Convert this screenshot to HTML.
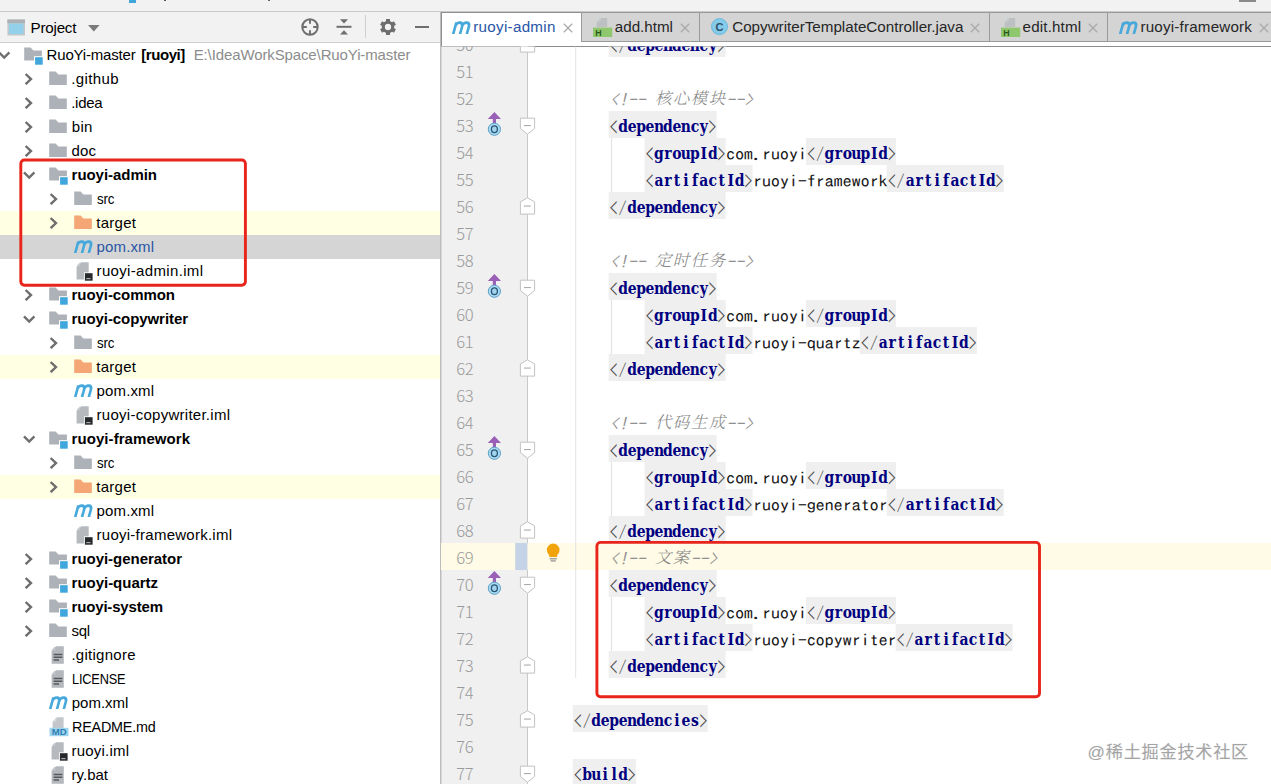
<!DOCTYPE html><html lang="zh"><head><meta charset="utf-8"><title>RuoYi-master - pom.xml (ruoyi-admin)</title><style>
html,body{margin:0;padding:0}
body{width:1271px;height:784px;overflow:hidden;position:relative;background:#fff;font-family:'Liberation Sans', 'Noto Sans CJK SC', sans-serif;color:#000}
.ab{position:absolute}
.row{position:absolute;left:0;width:440px;height:24px}
.t{white-space:pre;line-height:24px;height:24px;color:#000}
.t.b{font-weight:bold}
.t.g{color:#8c8c8c}
.t.tb{color:#262626}
.t.sel{color:#2a55a5}
svg text{white-space:pre}
.p{font-family:'IPAGothic', 'Liberation Mono', monospace;font-size:16.4px;fill:#4a4a4a;text-anchor:middle}
.cp{font-family:'IPAGothic', 'Liberation Mono', monospace;font-size:15.2px;font-style:italic;fill:#909090;text-anchor:middle}
.cd{font-family:'IPAGothic', 'Liberation Mono', monospace;font-size:17.6px;font-style:italic;fill:#909090;text-anchor:middle}
.tx{font-family:'IPAGothic', 'Liberation Mono', monospace;font-size:16.4px;fill:#161616;text-anchor:middle}
.ln{font-family:'Noto Sans CJK SC','Liberation Sans',sans-serif;font-weight:300;font-size:16.6px;fill:#9a9a9a;text-anchor:middle}
.zh{font-family:'Liberation Serif', 'Noto Serif CJK SC', serif;font-size:16.4px;font-style:italic;font-weight:300;fill:#868686;text-anchor:middle}
.bt{font-family:'DejaVu Serif','Liberation Serif', 'Noto Serif CJK SC', serif;font-size:16.8px;font-weight:bold;fill:#000080;text-anchor:middle}
</style></head><body>
<div class="ab" style="left:0;top:0;width:1271px;height:11.5px;background:#f2f2f2"></div>
<div class="ab" style="left:0;top:11px;width:1271px;height:1px;background:#c9c9c9"></div>
<div class="ab" style="left:0;top:12px;width:440px;height:30px;background:#f2f2f2"></div>
<div class="ab" style="left:0;top:41.6px;width:440px;height:1px;background:#cfcfcf"></div>
<div class="ab" style="left:440px;top:12px;width:1px;height:772px;background:#bdbdbd"></div>
<div class="ab" style="left:441px;top:12px;width:830px;height:34px;background:#fff"></div>
<svg class="ab" style="left:6.6px;top:19px" width="19" height="18" viewBox="0 0 19 18"><rect x="0.4" y="0.5" width="17.6" height="16" fill="#c3c7cb"/><rect x="2" y="4.4" width="14.4" height="10.6" fill="#93d1ea"/><rect x="0.4" y="0.5" width="17.6" height="3.6" fill="#adb1b6"/></svg>
<span class="ab t " style="left:30.6px;top:15.6px;font-size:15.2px;letter-spacing:-0.235px;">Project</span>
<svg class="ab" style="left:88px;top:24.6px" width="12" height="7" viewBox="0 0 12 7"><path d="M0 0 H11.6 L5.8 6.4 Z" fill="#7a7a7a"/></svg>
<svg class="ab" style="left:300px;top:17px" width="20" height="20" viewBox="0 0 20 20"><circle cx="10" cy="10" r="7.7" fill="none" stroke="#6e6e6e" stroke-width="2"/><path d="M10 2 V6.8 M10 13.2 V18 M2 10 H6.8 M13.2 10 H18" stroke="#6e6e6e" stroke-width="1.9"/></svg>
<svg class="ab" style="left:336px;top:18px" width="16" height="18" viewBox="0 0 16 18"><path d="M0.5 8.8 H15.5" stroke="#6e6e6e" stroke-width="2"/><path d="M4 1.2 H12 L8 5.6 Z M4 16.6 H12 L8 12.2 Z" fill="#6e6e6e"/></svg>
<div class="ab" style="left:365px;top:15px;width:1px;height:23px;background:#d0d0d0"></div>
<svg class="ab" style="left:379px;top:18px" width="18" height="18" viewBox="-9 -9 18 18"><rect x="-2" y="-8" width="4" height="4.4" transform="rotate(0)" fill="#6e6e6e"/><rect x="-2" y="-8" width="4" height="4.4" transform="rotate(60)" fill="#6e6e6e"/><rect x="-2" y="-8" width="4" height="4.4" transform="rotate(120)" fill="#6e6e6e"/><rect x="-2" y="-8" width="4" height="4.4" transform="rotate(180)" fill="#6e6e6e"/><rect x="-2" y="-8" width="4" height="4.4" transform="rotate(240)" fill="#6e6e6e"/><rect x="-2" y="-8" width="4" height="4.4" transform="rotate(300)" fill="#6e6e6e"/><circle cx="0" cy="0" r="4.7" fill="none" stroke="#6e6e6e" stroke-width="3.1"/></svg>
<div class="ab" style="left:414.6px;top:25.8px;width:14.8px;height:2.4px;background:#6e6e6e"></div>
<div class="ab" style="left:1238.6px;top:0;width:17.4px;height:1.6px;background:#8a8a8a"></div>
<div class="ab" style="left:128.6px;top:0;width:7.4px;height:2.6px;background:#3fa7dc"></div>
<div class="ab" style="left:163.6px;top:0;width:2.2px;height:1.4px;background:#555"></div>
<div class="ab" style="left:268px;top:0;width:1.6px;height:1px;background:#666"></div>
<div id="side">
<div class="row" style="top:43px;"></div>
<svg class="ab" style="left:-1.9px;top:51.4px" width="13" height="9" viewBox="0 0 13 9"><path d="M1 1.4 L6.2 6.6 L11.4 1.4" fill="none" stroke="#6e6e6e" stroke-width="2.4"/></svg>
<svg class="ab" style="left:24.0px;top:47px" width="20" height="19" viewBox="0 0 20 19"><path d="M0.2 0.6 H6.6 L9.4 3.4 H17.9 V13.6 H0.2 Z" fill="#adb1b8"/><rect x="10" y="9.2" width="9.6" height="9.2" fill="#fff"/><rect x="11.1" y="10.2" width="7.6" height="7.5" fill="#3fa7dc"/></svg>
<span class="ab t " style="left:46.6px;top:43px;font-size:15.0px;letter-spacing:-0.185px;">RuoYi-master</span>
<span class="ab t b" style="left:141.2px;top:43px;font-size:15.0px;letter-spacing:-0.427px;">[ruoyi]</span>
<span class="ab t g" style="left:193.7px;top:43px;font-size:15.0px;letter-spacing:-0.118px;">E:\IdeaWorkSpace\RuoYi-master</span>
<div class="row" style="top:67px;"></div>
<svg class="ab" style="left:23.8px;top:72.7px" width="9" height="12" viewBox="0 0 9 12"><path d="M1.6 1 L7 6.1 L1.6 11.2" fill="none" stroke="#6e6e6e" stroke-width="2.4"/></svg>
<svg class="ab" style="left:49.2px;top:71px" width="19" height="15" viewBox="0 0 19 15"><path d="M0.2 0.6 H6.6 L9.4 3.4 H17.8 V13.9 H0.2 Z" fill="#adb1b8"/></svg>
<span class="ab t " style="left:71.2px;top:67px;font-size:15.0px;letter-spacing:0.394px;">.github</span>
<div class="row" style="top:91px;"></div>
<svg class="ab" style="left:23.8px;top:96.7px" width="9" height="12" viewBox="0 0 9 12"><path d="M1.6 1 L7 6.1 L1.6 11.2" fill="none" stroke="#6e6e6e" stroke-width="2.4"/></svg>
<svg class="ab" style="left:49.2px;top:95px" width="19" height="15" viewBox="0 0 19 15"><path d="M0.2 0.6 H6.6 L9.4 3.4 H17.8 V13.9 H0.2 Z" fill="#adb1b8"/></svg>
<span class="ab t " style="left:71.2px;top:91px;font-size:15.0px;letter-spacing:-0.257px;">.idea</span>
<div class="row" style="top:115px;"></div>
<svg class="ab" style="left:23.8px;top:120.7px" width="9" height="12" viewBox="0 0 9 12"><path d="M1.6 1 L7 6.1 L1.6 11.2" fill="none" stroke="#6e6e6e" stroke-width="2.4"/></svg>
<svg class="ab" style="left:49.2px;top:119px" width="19" height="15" viewBox="0 0 19 15"><path d="M0.2 0.6 H6.6 L9.4 3.4 H17.8 V13.9 H0.2 Z" fill="#adb1b8"/></svg>
<span class="ab t " style="left:71.8px;top:115px;font-size:15.0px;letter-spacing:0.291px;">bin</span>
<div class="row" style="top:139px;"></div>
<svg class="ab" style="left:23.8px;top:144.7px" width="9" height="12" viewBox="0 0 9 12"><path d="M1.6 1 L7 6.1 L1.6 11.2" fill="none" stroke="#6e6e6e" stroke-width="2.4"/></svg>
<svg class="ab" style="left:49.2px;top:143px" width="19" height="15" viewBox="0 0 19 15"><path d="M0.2 0.6 H6.6 L9.4 3.4 H17.8 V13.9 H0.2 Z" fill="#adb1b8"/></svg>
<span class="ab t " style="left:71.6px;top:139px;font-size:15.0px;letter-spacing:0.107px;">doc</span>
<div class="row" style="top:163px;"></div>
<svg class="ab" style="left:23.099999999999998px;top:171.4px" width="13" height="9" viewBox="0 0 13 9"><path d="M1 1.4 L6.2 6.6 L11.4 1.4" fill="none" stroke="#6e6e6e" stroke-width="2.4"/></svg>
<svg class="ab" style="left:49.2px;top:167px" width="20" height="19" viewBox="0 0 20 19"><path d="M0.2 0.6 H6.6 L9.4 3.4 H17.9 V13.6 H0.2 Z" fill="#adb1b8"/><rect x="10" y="9.2" width="9.6" height="9.2" fill="#fff"/><rect x="11.1" y="10.2" width="7.6" height="7.5" fill="#3fa7dc"/></svg>
<span class="ab t b" style="left:71.6px;top:163px;font-size:15.0px;letter-spacing:-0.044px;">ruoyi-admin</span>
<div class="row" style="top:187px;"></div>
<svg class="ab" style="left:49.0px;top:192.7px" width="9" height="12" viewBox="0 0 9 12"><path d="M1.6 1 L7 6.1 L1.6 11.2" fill="none" stroke="#6e6e6e" stroke-width="2.4"/></svg>
<svg class="ab" style="left:74.1px;top:191px" width="19" height="15" viewBox="0 0 19 15"><path d="M0.2 0.6 H6.6 L9.4 3.4 H17.8 V13.9 H0.2 Z" fill="#adb1b8"/></svg>
<span class="ab t " style="left:96.6px;top:187px;font-size:15.0px;letter-spacing:-0.200px;display:inline-block;transform:scaleX(0.8879);transform-origin:0 50%;">src</span>
<div class="row" style="top:211px;background:#ffffe4;"></div>
<svg class="ab" style="left:49.0px;top:216.7px" width="9" height="12" viewBox="0 0 9 12"><path d="M1.6 1 L7 6.1 L1.6 11.2" fill="none" stroke="#6e6e6e" stroke-width="2.4"/></svg>
<svg class="ab" style="left:74.1px;top:215px" width="19" height="15" viewBox="0 0 19 15"><path d="M0.2 0.6 H6.6 L9.4 3.4 H17.8 V13.9 H0.2 Z" fill="#f4a674"/></svg>
<span class="ab t " style="left:96.3px;top:211px;font-size:15.0px;letter-spacing:0.268px;">target</span>
<div class="row" style="top:235px;background:#d5d5d5;"></div>
<svg class="ab" style="left:73.6px;top:239.4px" width="21" height="15" viewBox="0 0 21 15"><g transform="translate(3.4 0) skewX(-15)" fill="none" stroke="#47a9db" stroke-width="2.7" stroke-linejoin="round"><path d="M1.6 14 V2.2 M1.6 6.6 C1.6 1.4 8.4 1.4 8.4 6.4 V14 M8.4 6.6 C8.4 1.4 15.2 1.4 15.2 6.4 V14"/></g></svg>
<span class="ab t sel" style="left:96.6px;top:235px;font-size:15.0px;letter-spacing:0.121px;">pom.xml</span>
<div class="row" style="top:259px;"></div>
<svg class="ab" style="left:76.1px;top:262.1px" width="17" height="19" viewBox="0 0 17 19"><path d="M5.2 0.3 H12.7 V17.4 H0.6 V4.9 Z" fill="#b6babf"/><path d="M4.1 0.3 V3.9 H0.6 Z" fill="#c6c9cd"/><rect x="8" y="10.4" width="8.8" height="8.6" fill="#fff"/><rect x="8.9" y="11.2" width="7.7" height="7.5" fill="#26282b"/><rect x="10.3" y="16" width="4.2" height="1.2" fill="#a9acb0"/></svg>
<span class="ab t " style="left:96.6px;top:259px;font-size:15.0px;letter-spacing:0.336px;">ruoyi-admin.iml</span>
<div class="row" style="top:283px;"></div>
<svg class="ab" style="left:23.8px;top:288.7px" width="9" height="12" viewBox="0 0 9 12"><path d="M1.6 1 L7 6.1 L1.6 11.2" fill="none" stroke="#6e6e6e" stroke-width="2.4"/></svg>
<svg class="ab" style="left:49.2px;top:287px" width="20" height="19" viewBox="0 0 20 19"><path d="M0.2 0.6 H6.6 L9.4 3.4 H17.9 V13.6 H0.2 Z" fill="#adb1b8"/><rect x="10" y="9.2" width="9.6" height="9.2" fill="#fff"/><rect x="11.1" y="10.2" width="7.6" height="7.5" fill="#3fa7dc"/></svg>
<span class="ab t b" style="left:71.6px;top:283px;font-size:15.0px;letter-spacing:-0.070px;">ruoyi-common</span>
<div class="row" style="top:307px;"></div>
<svg class="ab" style="left:23.099999999999998px;top:315.4px" width="13" height="9" viewBox="0 0 13 9"><path d="M1 1.4 L6.2 6.6 L11.4 1.4" fill="none" stroke="#6e6e6e" stroke-width="2.4"/></svg>
<svg class="ab" style="left:49.2px;top:311px" width="20" height="19" viewBox="0 0 20 19"><path d="M0.2 0.6 H6.6 L9.4 3.4 H17.9 V13.6 H0.2 Z" fill="#adb1b8"/><rect x="10" y="9.2" width="9.6" height="9.2" fill="#fff"/><rect x="11.1" y="10.2" width="7.6" height="7.5" fill="#3fa7dc"/></svg>
<span class="ab t b" style="left:71.6px;top:307px;font-size:15.0px;letter-spacing:-0.075px;">ruoyi-copywriter</span>
<div class="row" style="top:331px;"></div>
<svg class="ab" style="left:49.0px;top:336.7px" width="9" height="12" viewBox="0 0 9 12"><path d="M1.6 1 L7 6.1 L1.6 11.2" fill="none" stroke="#6e6e6e" stroke-width="2.4"/></svg>
<svg class="ab" style="left:74.1px;top:335px" width="19" height="15" viewBox="0 0 19 15"><path d="M0.2 0.6 H6.6 L9.4 3.4 H17.8 V13.9 H0.2 Z" fill="#adb1b8"/></svg>
<span class="ab t " style="left:96.6px;top:331px;font-size:15.0px;letter-spacing:-0.200px;display:inline-block;transform:scaleX(0.8879);transform-origin:0 50%;">src</span>
<div class="row" style="top:355px;background:#ffffe4;"></div>
<svg class="ab" style="left:49.0px;top:360.7px" width="9" height="12" viewBox="0 0 9 12"><path d="M1.6 1 L7 6.1 L1.6 11.2" fill="none" stroke="#6e6e6e" stroke-width="2.4"/></svg>
<svg class="ab" style="left:74.1px;top:359px" width="19" height="15" viewBox="0 0 19 15"><path d="M0.2 0.6 H6.6 L9.4 3.4 H17.8 V13.9 H0.2 Z" fill="#f4a674"/></svg>
<span class="ab t " style="left:96.3px;top:355px;font-size:15.0px;letter-spacing:0.268px;">target</span>
<div class="row" style="top:379px;"></div>
<svg class="ab" style="left:73.6px;top:383.4px" width="21" height="15" viewBox="0 0 21 15"><g transform="translate(3.4 0) skewX(-15)" fill="none" stroke="#47a9db" stroke-width="2.7" stroke-linejoin="round"><path d="M1.6 14 V2.2 M1.6 6.6 C1.6 1.4 8.4 1.4 8.4 6.4 V14 M8.4 6.6 C8.4 1.4 15.2 1.4 15.2 6.4 V14"/></g></svg>
<span class="ab t " style="left:96.6px;top:379px;font-size:15.0px;letter-spacing:0.121px;">pom.xml</span>
<div class="row" style="top:403px;"></div>
<svg class="ab" style="left:76.1px;top:406.1px" width="17" height="19" viewBox="0 0 17 19"><path d="M5.2 0.3 H12.7 V17.4 H0.6 V4.9 Z" fill="#b6babf"/><path d="M4.1 0.3 V3.9 H0.6 Z" fill="#c6c9cd"/><rect x="8" y="10.4" width="8.8" height="8.6" fill="#fff"/><rect x="8.9" y="11.2" width="7.7" height="7.5" fill="#26282b"/><rect x="10.3" y="16" width="4.2" height="1.2" fill="#a9acb0"/></svg>
<span class="ab t " style="left:96.6px;top:403px;font-size:15.0px;letter-spacing:0.265px;">ruoyi-copywriter.iml</span>
<div class="row" style="top:427px;"></div>
<svg class="ab" style="left:23.099999999999998px;top:435.4px" width="13" height="9" viewBox="0 0 13 9"><path d="M1 1.4 L6.2 6.6 L11.4 1.4" fill="none" stroke="#6e6e6e" stroke-width="2.4"/></svg>
<svg class="ab" style="left:49.2px;top:431px" width="20" height="19" viewBox="0 0 20 19"><path d="M0.2 0.6 H6.6 L9.4 3.4 H17.9 V13.6 H0.2 Z" fill="#adb1b8"/><rect x="10" y="9.2" width="9.6" height="9.2" fill="#fff"/><rect x="11.1" y="10.2" width="7.6" height="7.5" fill="#3fa7dc"/></svg>
<span class="ab t b" style="left:71.6px;top:427px;font-size:15.0px;letter-spacing:0.062px;">ruoyi-framework</span>
<div class="row" style="top:451px;"></div>
<svg class="ab" style="left:49.0px;top:456.7px" width="9" height="12" viewBox="0 0 9 12"><path d="M1.6 1 L7 6.1 L1.6 11.2" fill="none" stroke="#6e6e6e" stroke-width="2.4"/></svg>
<svg class="ab" style="left:74.1px;top:455px" width="19" height="15" viewBox="0 0 19 15"><path d="M0.2 0.6 H6.6 L9.4 3.4 H17.8 V13.9 H0.2 Z" fill="#adb1b8"/></svg>
<span class="ab t " style="left:96.6px;top:451px;font-size:15.0px;letter-spacing:-0.200px;display:inline-block;transform:scaleX(0.8879);transform-origin:0 50%;">src</span>
<div class="row" style="top:475px;background:#ffffe4;"></div>
<svg class="ab" style="left:49.0px;top:480.7px" width="9" height="12" viewBox="0 0 9 12"><path d="M1.6 1 L7 6.1 L1.6 11.2" fill="none" stroke="#6e6e6e" stroke-width="2.4"/></svg>
<svg class="ab" style="left:74.1px;top:479px" width="19" height="15" viewBox="0 0 19 15"><path d="M0.2 0.6 H6.6 L9.4 3.4 H17.8 V13.9 H0.2 Z" fill="#f4a674"/></svg>
<span class="ab t " style="left:96.3px;top:475px;font-size:15.0px;letter-spacing:0.268px;">target</span>
<div class="row" style="top:499px;"></div>
<svg class="ab" style="left:73.6px;top:503.4px" width="21" height="15" viewBox="0 0 21 15"><g transform="translate(3.4 0) skewX(-15)" fill="none" stroke="#47a9db" stroke-width="2.7" stroke-linejoin="round"><path d="M1.6 14 V2.2 M1.6 6.6 C1.6 1.4 8.4 1.4 8.4 6.4 V14 M8.4 6.6 C8.4 1.4 15.2 1.4 15.2 6.4 V14"/></g></svg>
<span class="ab t " style="left:96.6px;top:499px;font-size:15.0px;letter-spacing:0.121px;">pom.xml</span>
<div class="row" style="top:523px;"></div>
<svg class="ab" style="left:76.1px;top:526.1px" width="17" height="19" viewBox="0 0 17 19"><path d="M5.2 0.3 H12.7 V17.4 H0.6 V4.9 Z" fill="#b6babf"/><path d="M4.1 0.3 V3.9 H0.6 Z" fill="#c6c9cd"/><rect x="8" y="10.4" width="8.8" height="8.6" fill="#fff"/><rect x="8.9" y="11.2" width="7.7" height="7.5" fill="#26282b"/><rect x="10.3" y="16" width="4.2" height="1.2" fill="#a9acb0"/></svg>
<span class="ab t " style="left:96.6px;top:523px;font-size:15.0px;letter-spacing:0.253px;">ruoyi-framework.iml</span>
<div class="row" style="top:547px;"></div>
<svg class="ab" style="left:23.8px;top:552.7px" width="9" height="12" viewBox="0 0 9 12"><path d="M1.6 1 L7 6.1 L1.6 11.2" fill="none" stroke="#6e6e6e" stroke-width="2.4"/></svg>
<svg class="ab" style="left:49.2px;top:551px" width="20" height="19" viewBox="0 0 20 19"><path d="M0.2 0.6 H6.6 L9.4 3.4 H17.9 V13.6 H0.2 Z" fill="#adb1b8"/><rect x="10" y="9.2" width="9.6" height="9.2" fill="#fff"/><rect x="11.1" y="10.2" width="7.6" height="7.5" fill="#3fa7dc"/></svg>
<span class="ab t b" style="left:71.6px;top:547px;font-size:15.0px;letter-spacing:-0.032px;">ruoyi-generator</span>
<div class="row" style="top:571px;"></div>
<svg class="ab" style="left:23.8px;top:576.7px" width="9" height="12" viewBox="0 0 9 12"><path d="M1.6 1 L7 6.1 L1.6 11.2" fill="none" stroke="#6e6e6e" stroke-width="2.4"/></svg>
<svg class="ab" style="left:49.2px;top:575px" width="20" height="19" viewBox="0 0 20 19"><path d="M0.2 0.6 H6.6 L9.4 3.4 H17.9 V13.6 H0.2 Z" fill="#adb1b8"/><rect x="10" y="9.2" width="9.6" height="9.2" fill="#fff"/><rect x="11.1" y="10.2" width="7.6" height="7.5" fill="#3fa7dc"/></svg>
<span class="ab t b" style="left:71.6px;top:571px;font-size:15.0px;letter-spacing:-0.025px;">ruoyi-quartz</span>
<div class="row" style="top:595px;"></div>
<svg class="ab" style="left:23.8px;top:600.7px" width="9" height="12" viewBox="0 0 9 12"><path d="M1.6 1 L7 6.1 L1.6 11.2" fill="none" stroke="#6e6e6e" stroke-width="2.4"/></svg>
<svg class="ab" style="left:49.2px;top:599px" width="20" height="19" viewBox="0 0 20 19"><path d="M0.2 0.6 H6.6 L9.4 3.4 H17.9 V13.6 H0.2 Z" fill="#adb1b8"/><rect x="10" y="9.2" width="9.6" height="9.2" fill="#fff"/><rect x="11.1" y="10.2" width="7.6" height="7.5" fill="#3fa7dc"/></svg>
<span class="ab t b" style="left:71.6px;top:595px;font-size:15.0px;letter-spacing:-0.179px;">ruoyi-system</span>
<div class="row" style="top:619px;"></div>
<svg class="ab" style="left:23.8px;top:624.7px" width="9" height="12" viewBox="0 0 9 12"><path d="M1.6 1 L7 6.1 L1.6 11.2" fill="none" stroke="#6e6e6e" stroke-width="2.4"/></svg>
<svg class="ab" style="left:49.2px;top:623px" width="19" height="15" viewBox="0 0 19 15"><path d="M0.2 0.6 H6.6 L9.4 3.4 H17.8 V13.9 H0.2 Z" fill="#adb1b8"/></svg>
<span class="ab t " style="left:71.6px;top:619px;font-size:15.0px;letter-spacing:-0.388px;">sql</span>
<div class="row" style="top:643px;"></div>
<svg class="ab" style="left:51.1px;top:645.8px" width="14" height="19" viewBox="0 0 14 19"><path d="M5.2 0.3 H12.8 V17.8 H0.6 V4.9 Z" fill="#b4b8bd"/><path d="M4.1 0.3 V3.9 H0.6 Z" fill="#c6c9cd"/><path d="M2.6 8.6 H11.4 M2.6 11.3 H11.4 M2.6 14 H8" stroke="#55595e" stroke-width="1.5"/></svg>
<span class="ab t " style="left:71.4px;top:643px;font-size:15.0px;letter-spacing:0.266px;">.gitignore</span>
<div class="row" style="top:667px;"></div>
<svg class="ab" style="left:51.1px;top:669.8px" width="14" height="19" viewBox="0 0 14 19"><path d="M5.2 0.3 H12.8 V17.8 H0.6 V4.9 Z" fill="#b4b8bd"/><path d="M4.1 0.3 V3.9 H0.6 Z" fill="#c6c9cd"/><path d="M2.6 8.6 H11.4 M2.6 11.3 H11.4 M2.6 14 H8" stroke="#55595e" stroke-width="1.5"/></svg>
<span class="ab t " style="left:71.7px;top:667px;font-size:15.0px;letter-spacing:-0.200px;display:inline-block;transform:scaleX(0.8509);transform-origin:0 50%;">LICENSE</span>
<div class="row" style="top:691px;"></div>
<svg class="ab" style="left:48.7px;top:695.4px" width="21" height="15" viewBox="0 0 21 15"><g transform="translate(3.4 0) skewX(-15)" fill="none" stroke="#47a9db" stroke-width="2.7" stroke-linejoin="round"><path d="M1.6 14 V2.2 M1.6 6.6 C1.6 1.4 8.4 1.4 8.4 6.4 V14 M8.4 6.6 C8.4 1.4 15.2 1.4 15.2 6.4 V14"/></g></svg>
<span class="ab t " style="left:71.7px;top:691px;font-size:15.0px;letter-spacing:0.004px;">pom.xml</span>
<div class="row" style="top:715px;"></div>
<svg class="ab" style="left:48.5px;top:717.2px" width="21" height="20" viewBox="0 0 21 20"><path d="M8 0.3 H14.6 V11 H3.6 V4.9 Z" fill="#c3c6ca"/><path d="M7.4 0.2 V4.4 H3.5 Z" fill="#d9dbde"/><rect x="0.5" y="10.8" width="19" height="8.4" fill="#9fd4ee"/><text x="10.2" y="18.2" font-family="'Liberation Sans', 'Noto Sans CJK SC', sans-serif" font-size="8.2" font-weight="bold" fill="#2f7fb4" text-anchor="middle" textLength="15" lengthAdjust="spacingAndGlyphs">MD</text></svg>
<span class="ab t " style="left:71.7px;top:715px;font-size:15.0px;letter-spacing:-0.200px;display:inline-block;transform:scaleX(0.9568);transform-origin:0 50%;">README.md</span>
<div class="row" style="top:739px;"></div>
<svg class="ab" style="left:51.2px;top:742.1px" width="17" height="19" viewBox="0 0 17 19"><path d="M5.2 0.3 H12.7 V17.4 H0.6 V4.9 Z" fill="#b6babf"/><path d="M4.1 0.3 V3.9 H0.6 Z" fill="#c6c9cd"/><rect x="8" y="10.4" width="8.8" height="8.6" fill="#fff"/><rect x="8.9" y="11.2" width="7.7" height="7.5" fill="#26282b"/><rect x="10.3" y="16" width="4.2" height="1.2" fill="#a9acb0"/></svg>
<span class="ab t " style="left:71.6px;top:739px;font-size:15.0px;letter-spacing:0.195px;">ruoyi.iml</span>
<div class="row" style="top:763px;"></div>
<svg class="ab" style="left:51.1px;top:765.8px" width="14" height="19" viewBox="0 0 14 19"><path d="M5.2 0.3 H12.8 V17.8 H0.6 V4.9 Z" fill="#b4b8bd"/><path d="M4.1 0.3 V3.9 H0.6 Z" fill="#c6c9cd"/><path d="M2.6 8.6 H11.4 M2.6 11.3 H11.4 M2.6 14 H8" stroke="#55595e" stroke-width="1.5"/></svg>
<span class="ab t " style="left:71.6px;top:763px;font-size:15.0px;letter-spacing:-0.001px;">ry.bat</span>
</div>
<div id="tabs">
<div class="ab" style="left:441px;top:11.5px;width:140px;height:35px;background:#fff;border-left:1px solid #8f8f8f;border-top:1px solid #8f8f8f;box-sizing:border-box"></div>
<svg class="ab" style="left:451.8px;top:19.8px" width="21" height="15" viewBox="0 0 21 15"><g transform="translate(3.4 0) skewX(-15)" fill="none" stroke="#47a9db" stroke-width="2.7" stroke-linejoin="round"><path d="M1.6 14 V2.2 M1.6 6.6 C1.6 1.4 8.4 1.4 8.4 6.4 V14 M8.4 6.6 C8.4 1.4 15.2 1.4 15.2 6.4 V14"/></g></svg>
<span class="ab t sel" style="left:473.2px;top:15px;font-size:15.2px;letter-spacing:0.289px;">ruoyi-admin</span>
<svg class="ab" style="left:563.0px;top:22.5px" width="10" height="10" viewBox="0 0 10 10"><path d="M0.8 0.8 L9.2 9.2 M9.2 0.8 L0.8 9.2" stroke="#a9a9a9" stroke-width="1.25" fill="none"/></svg>
<div class="ab" style="left:581px;top:11.5px;width:118px;height:30.5px;background:#d4d4d4;border:1px solid #9a9a9a;border-right:none;box-sizing:border-box"></div>
<svg class="ab" style="left:593px;top:17px" width="20" height="21" viewBox="0 0 20 21"><path d="M8.2 1 H14.2 V10 H3.6 V5.4 Z" fill="#bdc0c3"/><path d="M7.5 0.8 V4.8 H3.4 Z" fill="#c9cbce"/><rect x="0" y="10.6" width="19.2" height="9.4" fill="#8fc76d"/><text x="5.4" y="18.6" font-family="'Liberation Sans', 'Noto Sans CJK SC', sans-serif" font-size="8.8" font-weight="bold" fill="#2a5a1b" text-anchor="middle">H</text></svg>
<span class="ab t tb" style="left:614.8px;top:15px;font-size:15.2px;letter-spacing:-0.014px;">add.html</span>
<svg class="ab" style="left:680.1px;top:22.5px" width="10" height="10" viewBox="0 0 10 10"><path d="M0.8 0.8 L9.2 9.2 M9.2 0.8 L0.8 9.2" stroke="#a9a9a9" stroke-width="1.25" fill="none"/></svg>
<div class="ab" style="left:699px;top:11.5px;width:290px;height:30.5px;background:#d4d4d4;border:1px solid #9a9a9a;border-right:none;box-sizing:border-box"></div>
<svg class="ab" style="left:711.3px;top:18.4px" width="18" height="18" viewBox="0 0 18 18"><circle cx="8.5" cy="8.6" r="8.0" fill="#84cbea" stroke="#62b6de" stroke-width="0.9"/><text x="8.6" y="12.6" font-family="'Liberation Sans', 'Noto Sans CJK SC', sans-serif" font-size="11" font-weight="bold" fill="#2f5068" text-anchor="middle">C</text></svg>
<span class="ab t tb" style="left:732.2px;top:15px;font-size:15.2px;letter-spacing:-0.002px;">CopywriterTemplateController.java</span>
<svg class="ab" style="left:970.4px;top:22.5px" width="10" height="10" viewBox="0 0 10 10"><path d="M0.8 0.8 L9.2 9.2 M9.2 0.8 L0.8 9.2" stroke="#a9a9a9" stroke-width="1.25" fill="none"/></svg>
<div class="ab" style="left:989px;top:11.5px;width:118px;height:30.5px;background:#d4d4d4;border:1px solid #9a9a9a;border-right:none;box-sizing:border-box"></div>
<svg class="ab" style="left:1000.6px;top:17px" width="20" height="21" viewBox="0 0 20 21"><path d="M8.2 1 H14.2 V10 H3.6 V5.4 Z" fill="#bdc0c3"/><path d="M7.5 0.8 V4.8 H3.4 Z" fill="#c9cbce"/><rect x="0" y="10.6" width="19.2" height="9.4" fill="#8fc76d"/><text x="5.4" y="18.6" font-family="'Liberation Sans', 'Noto Sans CJK SC', sans-serif" font-size="8.8" font-weight="bold" fill="#2a5a1b" text-anchor="middle">H</text></svg>
<span class="ab t tb" style="left:1022.6px;top:15px;font-size:15.2px;letter-spacing:0.144px;">edit.html</span>
<svg class="ab" style="left:1088.0px;top:22.5px" width="10" height="10" viewBox="0 0 10 10"><path d="M0.8 0.8 L9.2 9.2 M9.2 0.8 L0.8 9.2" stroke="#a9a9a9" stroke-width="1.25" fill="none"/></svg>
<div class="ab" style="left:1107px;top:11.5px;width:165px;height:30.5px;background:#d4d4d4;border:1px solid #9a9a9a;border-right:none;box-sizing:border-box"></div>
<svg class="ab" style="left:1119.3px;top:19.8px" width="21" height="15" viewBox="0 0 21 15"><g transform="translate(3.4 0) skewX(-15)" fill="none" stroke="#47a9db" stroke-width="2.7" stroke-linejoin="round"><path d="M1.6 14 V2.2 M1.6 6.6 C1.6 1.4 8.4 1.4 8.4 6.4 V14 M8.4 6.6 C8.4 1.4 15.2 1.4 15.2 6.4 V14"/></g></svg>
<span class="ab t tb" style="left:1140.5px;top:15px;font-size:15.2px;letter-spacing:0.182px;">ruoyi-framework</span>
<svg class="ab" style="left:1258.5px;top:22.5px" width="10" height="10" viewBox="0 0 10 10"><path d="M0.8 0.8 L9.2 9.2 M9.2 0.8 L0.8 9.2" stroke="#a9a9a9" stroke-width="1.25" fill="none"/></svg>
<div class="ab" style="left:441px;top:45.6px;width:830px;height:1.2px;background:#8c8c8c"></div>
</div>
<svg class="ab" style="left:0;top:0" width="1271" height="784" viewBox="0 0 1271 784"><defs><clipPath id="ed"><rect x="440" y="46.6" width="840" height="740"/></clipPath></defs><g clip-path="url(#ed)"><rect x="441" y="46" width="86.5" height="740" fill="#f0f0f0"/><rect x="440.3" y="46" width="1.2" height="740" fill="#bdbdbd"/><rect x="527" y="46" width="1" height="740" fill="#c9c9c9"/><rect x="441" y="543.00" width="830" height="27.0" fill="#fffbe6"/><rect x="608.66" y="30.00" width="117.01" height="27.05" fill="#efefef"/><rect x="608.66" y="111.00" width="108.04" height="27.05" fill="#efefef"/><rect x="644.54" y="138.00" width="81.13" height="27.05" fill="#efefef"/><rect x="806.00" y="138.00" width="90.10" height="27.05" fill="#efefef"/><rect x="644.54" y="165.00" width="108.04" height="27.05" fill="#efefef"/><rect x="886.73" y="165.00" width="117.01" height="27.05" fill="#efefef"/><rect x="608.66" y="192.00" width="117.01" height="27.05" fill="#efefef"/><rect x="608.66" y="273.00" width="108.04" height="27.05" fill="#efefef"/><rect x="644.54" y="300.00" width="81.13" height="27.05" fill="#efefef"/><rect x="806.00" y="300.00" width="90.10" height="27.05" fill="#efefef"/><rect x="644.54" y="327.00" width="108.04" height="27.05" fill="#efefef"/><rect x="859.82" y="327.00" width="117.01" height="27.05" fill="#efefef"/><rect x="608.66" y="354.00" width="117.01" height="27.05" fill="#efefef"/><rect x="608.66" y="435.00" width="108.04" height="27.05" fill="#efefef"/><rect x="644.54" y="462.00" width="81.13" height="27.05" fill="#efefef"/><rect x="806.00" y="462.00" width="90.10" height="27.05" fill="#efefef"/><rect x="644.54" y="489.00" width="108.04" height="27.05" fill="#efefef"/><rect x="886.73" y="489.00" width="117.01" height="27.05" fill="#efefef"/><rect x="608.66" y="516.00" width="117.01" height="27.05" fill="#efefef"/><rect x="608.66" y="570.00" width="108.04" height="27.05" fill="#efefef"/><rect x="644.54" y="597.00" width="81.13" height="27.05" fill="#efefef"/><rect x="806.00" y="597.00" width="90.10" height="27.05" fill="#efefef"/><rect x="644.54" y="624.00" width="108.04" height="27.05" fill="#efefef"/><rect x="895.70" y="624.00" width="117.01" height="27.05" fill="#efefef"/><rect x="608.66" y="651.00" width="117.01" height="27.05" fill="#efefef"/><rect x="572.78" y="705.00" width="134.95" height="27.05" fill="#efefef"/><rect x="572.78" y="759.00" width="63.19" height="27.05" fill="#efefef"/><rect x="515.2" y="543.00" width="12.2" height="27.0" fill="#c4d3e6"/><rect x="575.2" y="46" width="1" height="632.00" fill="#e3e3e3"/><rect x="610.9" y="138.00" width="1" height="54.00" fill="#e0e0e0"/><rect x="610.9" y="300.00" width="1" height="54.00" fill="#e0e0e0"/><rect x="610.9" y="462.00" width="1" height="54.00" fill="#e0e0e0"/><rect x="610.9" y="597.00" width="1" height="54.00" fill="#e0e0e0"/><path d="M520.4 118.20 H534.6 V128.50 L527.5 134.20 L520.4 128.50 Z" fill="#fff" stroke="#c2c2c2" stroke-width="1"/><rect x="524.0" y="125.00" width="6.8" height="1.1" fill="#ababab"/><path d="M520.4 280.20 H534.6 V290.50 L527.5 296.20 L520.4 290.50 Z" fill="#fff" stroke="#c2c2c2" stroke-width="1"/><rect x="524.0" y="287.00" width="6.8" height="1.1" fill="#ababab"/><path d="M520.4 442.20 H534.6 V452.50 L527.5 458.20 L520.4 452.50 Z" fill="#fff" stroke="#c2c2c2" stroke-width="1"/><rect x="524.0" y="449.00" width="6.8" height="1.1" fill="#ababab"/><path d="M520.4 577.20 H534.6 V587.50 L527.5 593.20 L520.4 587.50 Z" fill="#fff" stroke="#c2c2c2" stroke-width="1"/><rect x="524.0" y="584.00" width="6.8" height="1.1" fill="#ababab"/><path d="M520.4 766.20 H534.6 V776.50 L527.5 782.20 L520.4 776.50 Z" fill="#fff" stroke="#c2c2c2" stroke-width="1"/><rect x="524.0" y="773.00" width="6.8" height="1.1" fill="#ababab"/><path d="M520.4 52.10 H534.6 V39.90 L527.5 35.80 L520.4 39.90 Z" fill="#fff" stroke="#c2c2c2" stroke-width="1"/><rect x="524.0" y="43.50" width="6.8" height="1.1" fill="#ababab"/><path d="M520.4 214.10 H534.6 V201.90 L527.5 197.80 L520.4 201.90 Z" fill="#fff" stroke="#c2c2c2" stroke-width="1"/><rect x="524.0" y="205.50" width="6.8" height="1.1" fill="#ababab"/><path d="M520.4 376.10 H534.6 V363.90 L527.5 359.80 L520.4 363.90 Z" fill="#fff" stroke="#c2c2c2" stroke-width="1"/><rect x="524.0" y="367.50" width="6.8" height="1.1" fill="#ababab"/><path d="M520.4 538.10 H534.6 V525.90 L527.5 521.80 L520.4 525.90 Z" fill="#fff" stroke="#c2c2c2" stroke-width="1"/><rect x="524.0" y="529.50" width="6.8" height="1.1" fill="#ababab"/><path d="M520.4 673.10 H534.6 V660.90 L527.5 656.80 L520.4 660.90 Z" fill="#fff" stroke="#c2c2c2" stroke-width="1"/><rect x="524.0" y="664.50" width="6.8" height="1.1" fill="#ababab"/><path d="M520.4 727.10 H534.6 V714.90 L527.5 710.80 L520.4 714.90 Z" fill="#fff" stroke="#c2c2c2" stroke-width="1"/><rect x="524.0" y="718.50" width="6.8" height="1.1" fill="#ababab"/><path d="M494.4 112.10 L501.0 119.00 H496.0 V123.50 H492.79999999999995 V119.00 H487.79999999999995 Z" fill="#9a5fb7"/><circle cx="494.4" cy="129.25" r="6.1" fill="#a6dbf4" stroke="#5f9fc6" stroke-width="1"/><ellipse cx="494.4" cy="129.25" rx="3.0" ry="3.3" fill="#a0d3ec" stroke="#2b5475" stroke-width="1.3"/><path d="M494.4 274.10 L501.0 281.00 H496.0 V285.50 H492.79999999999995 V281.00 H487.79999999999995 Z" fill="#9a5fb7"/><circle cx="494.4" cy="291.25" r="6.1" fill="#a6dbf4" stroke="#5f9fc6" stroke-width="1"/><ellipse cx="494.4" cy="291.25" rx="3.0" ry="3.3" fill="#a0d3ec" stroke="#2b5475" stroke-width="1.3"/><path d="M494.4 436.10 L501.0 443.00 H496.0 V447.50 H492.79999999999995 V443.00 H487.79999999999995 Z" fill="#9a5fb7"/><circle cx="494.4" cy="453.25" r="6.1" fill="#a6dbf4" stroke="#5f9fc6" stroke-width="1"/><ellipse cx="494.4" cy="453.25" rx="3.0" ry="3.3" fill="#a0d3ec" stroke="#2b5475" stroke-width="1.3"/><path d="M494.4 571.10 L501.0 578.00 H496.0 V582.50 H492.79999999999995 V578.00 H487.79999999999995 Z" fill="#9a5fb7"/><circle cx="494.4" cy="588.25" r="6.1" fill="#a6dbf4" stroke="#5f9fc6" stroke-width="1"/><ellipse cx="494.4" cy="588.25" rx="3.0" ry="3.3" fill="#a0d3ec" stroke="#2b5475" stroke-width="1.3"/><path d="M553.2 543.60 a6.3 6.3 0 0 1 6.3 6.3 c0 2.6 -1.6 3.9 -2.4 5.6 v1.4 h-7.8 v-1.4 c-0.8 -1.7 -2.4 -3 -2.4 -5.6 a6.3 6.3 0 0 1 6.3 -6.3 Z" fill="#f0a30a"/><rect x="549.6" y="558.20" width="7.2" height="1.2" fill="#8c8c8c"/><rect x="550.6" y="560.30" width="5.2" height="1.2" fill="#8c8c8c"/><text class="p" transform="scale(0.9400 1)" x="652.87 662.41" y="51.60">&lt;/</text><text class="bt" transform="scale(0.8300 1)" x="761.55 772.36 783.16 793.97 804.78 815.58 826.39 837.20 848.01 858.81" y="50.70">dependency</text><text class="p" transform="scale(0.9400 1)" x="767.38" y="51.60">&gt;</text><text class="cp" transform="scale(0.9400 1)" x="653.56 663.10" y="105.30">&lt;!</text><text class="cd" transform="scale(1.0000 1)" x="632.09 641.05 650.02" y="105.90">-- </text><text class="zh" x="663.08 681.02 698.96 716.90" y="103.90">核心模块</text><text class="cd" transform="scale(1.0000 1)" x="730.75 739.73" y="105.90">--</text><text class="cp" transform="scale(0.9400 1)" x="796.70" y="105.30">&gt;</text><text class="p" transform="scale(0.9400 1)" x="652.87" y="132.60">&lt;</text><text class="bt" transform="scale(0.8300 1)" x="750.74 761.55 772.36 783.16 793.97 804.78 815.58 826.39 837.20 848.01" y="131.70">dependency</text><text class="p" transform="scale(0.9400 1)" x="757.84" y="132.60">&gt;</text><text class="p" transform="scale(0.9400 1)" x="691.04" y="159.60">&lt;</text><text class="bt" transform="scale(0.8300 1)" x="793.97 804.78 815.58 826.39 837.20 848.01 858.81" y="158.70">groupId</text><text class="p" transform="scale(0.9400 1)" x="767.38" y="159.60">&gt;</text><text class="tx" transform="scale(1.1300 1)" x="646.51 654.45 662.38 670.32 678.26 686.20 694.14 702.08 710.01" y="159.70">com.ruoyi</text><text class="p" transform="scale(0.9400 1)" x="862.80 872.35" y="159.60">&lt;/</text><text class="bt" transform="scale(0.8300 1)" x="999.31 1010.11 1020.92 1031.73 1042.54 1053.34 1064.15" y="158.70">groupId</text><text class="p" transform="scale(0.9400 1)" x="948.69" y="159.60">&gt;</text><text class="p" transform="scale(0.9400 1)" x="691.04" y="186.60">&lt;</text><text class="bt" transform="scale(0.8300 1)" x="793.97 804.78 815.58 826.39 837.20 848.01 858.81 869.62 880.43 891.23" y="185.70">artifactId</text><text class="p" transform="scale(0.9400 1)" x="796.01" y="186.60">&gt;</text><text class="tx" transform="scale(1.1300 1)" x="670.32 678.26 686.20 694.14 702.08 710.01 717.95 725.89 733.83 741.77 749.70 757.64 765.58 773.52 781.46" y="186.70">ruoyi-framework</text><text class="p" transform="scale(0.9400 1)" x="948.69 958.23" y="186.60">&lt;/</text><text class="bt" transform="scale(0.8300 1)" x="1096.57 1107.38 1118.19 1128.99 1139.80 1150.61 1161.42 1172.22 1183.03 1193.84" y="185.70">artifactId</text><text class="p" transform="scale(0.9400 1)" x="1063.20" y="186.60">&gt;</text><text class="p" transform="scale(0.9400 1)" x="652.87 662.41" y="213.60">&lt;/</text><text class="bt" transform="scale(0.8300 1)" x="761.55 772.36 783.16 793.97 804.78 815.58 826.39 837.20 848.01 858.81" y="212.70">dependency</text><text class="p" transform="scale(0.9400 1)" x="767.38" y="213.60">&gt;</text><text class="cp" transform="scale(0.9400 1)" x="653.56 663.10" y="267.30">&lt;!</text><text class="cd" transform="scale(1.0000 1)" x="632.09 641.05 650.02" y="267.90">-- </text><text class="zh" x="663.08 681.02 698.96 716.90" y="265.90">定时任务</text><text class="cd" transform="scale(1.0000 1)" x="730.75 739.73" y="267.90">--</text><text class="cp" transform="scale(0.9400 1)" x="796.70" y="267.30">&gt;</text><text class="p" transform="scale(0.9400 1)" x="652.87" y="294.60">&lt;</text><text class="bt" transform="scale(0.8300 1)" x="750.74 761.55 772.36 783.16 793.97 804.78 815.58 826.39 837.20 848.01" y="293.70">dependency</text><text class="p" transform="scale(0.9400 1)" x="757.84" y="294.60">&gt;</text><text class="p" transform="scale(0.9400 1)" x="691.04" y="321.60">&lt;</text><text class="bt" transform="scale(0.8300 1)" x="793.97 804.78 815.58 826.39 837.20 848.01 858.81" y="320.70">groupId</text><text class="p" transform="scale(0.9400 1)" x="767.38" y="321.60">&gt;</text><text class="tx" transform="scale(1.1300 1)" x="646.51 654.45 662.38 670.32 678.26 686.20 694.14 702.08 710.01" y="321.70">com.ruoyi</text><text class="p" transform="scale(0.9400 1)" x="862.80 872.35" y="321.60">&lt;/</text><text class="bt" transform="scale(0.8300 1)" x="999.31 1010.11 1020.92 1031.73 1042.54 1053.34 1064.15" y="320.70">groupId</text><text class="p" transform="scale(0.9400 1)" x="948.69" y="321.60">&gt;</text><text class="p" transform="scale(0.9400 1)" x="691.04" y="348.60">&lt;</text><text class="bt" transform="scale(0.8300 1)" x="793.97 804.78 815.58 826.39 837.20 848.01 858.81 869.62 880.43 891.23" y="347.70">artifactId</text><text class="p" transform="scale(0.9400 1)" x="796.01" y="348.60">&gt;</text><text class="tx" transform="scale(1.1300 1)" x="670.32 678.26 686.20 694.14 702.08 710.01 717.95 725.89 733.83 741.77 749.70 757.64" y="348.70">ruoyi-quartz</text><text class="p" transform="scale(0.9400 1)" x="920.06 929.60" y="348.60">&lt;/</text><text class="bt" transform="scale(0.8300 1)" x="1064.15 1074.96 1085.77 1096.57 1107.38 1118.19 1128.99 1139.80 1150.61 1161.42" y="347.70">artifactId</text><text class="p" transform="scale(0.9400 1)" x="1034.57" y="348.60">&gt;</text><text class="p" transform="scale(0.9400 1)" x="652.87 662.41" y="375.60">&lt;/</text><text class="bt" transform="scale(0.8300 1)" x="761.55 772.36 783.16 793.97 804.78 815.58 826.39 837.20 848.01 858.81" y="374.70">dependency</text><text class="p" transform="scale(0.9400 1)" x="767.38" y="375.60">&gt;</text><text class="cp" transform="scale(0.9400 1)" x="653.56 663.10" y="429.30">&lt;!</text><text class="cd" transform="scale(1.0000 1)" x="632.09 641.05 650.02" y="429.90">-- </text><text class="zh" x="663.08 681.02 698.96 716.90" y="427.90">代码生成</text><text class="cd" transform="scale(1.0000 1)" x="730.75 739.73" y="429.90">--</text><text class="cp" transform="scale(0.9400 1)" x="796.70" y="429.30">&gt;</text><text class="p" transform="scale(0.9400 1)" x="652.87" y="456.60">&lt;</text><text class="bt" transform="scale(0.8300 1)" x="750.74 761.55 772.36 783.16 793.97 804.78 815.58 826.39 837.20 848.01" y="455.70">dependency</text><text class="p" transform="scale(0.9400 1)" x="757.84" y="456.60">&gt;</text><text class="p" transform="scale(0.9400 1)" x="691.04" y="483.60">&lt;</text><text class="bt" transform="scale(0.8300 1)" x="793.97 804.78 815.58 826.39 837.20 848.01 858.81" y="482.70">groupId</text><text class="p" transform="scale(0.9400 1)" x="767.38" y="483.60">&gt;</text><text class="tx" transform="scale(1.1300 1)" x="646.51 654.45 662.38 670.32 678.26 686.20 694.14 702.08 710.01" y="483.70">com.ruoyi</text><text class="p" transform="scale(0.9400 1)" x="862.80 872.35" y="483.60">&lt;/</text><text class="bt" transform="scale(0.8300 1)" x="999.31 1010.11 1020.92 1031.73 1042.54 1053.34 1064.15" y="482.70">groupId</text><text class="p" transform="scale(0.9400 1)" x="948.69" y="483.60">&gt;</text><text class="p" transform="scale(0.9400 1)" x="691.04" y="510.60">&lt;</text><text class="bt" transform="scale(0.8300 1)" x="793.97 804.78 815.58 826.39 837.20 848.01 858.81 869.62 880.43 891.23" y="509.70">artifactId</text><text class="p" transform="scale(0.9400 1)" x="796.01" y="510.60">&gt;</text><text class="tx" transform="scale(1.1300 1)" x="670.32 678.26 686.20 694.14 702.08 710.01 717.95 725.89 733.83 741.77 749.70 757.64 765.58 773.52 781.46" y="510.70">ruoyi-generator</text><text class="p" transform="scale(0.9400 1)" x="948.69 958.23" y="510.60">&lt;/</text><text class="bt" transform="scale(0.8300 1)" x="1096.57 1107.38 1118.19 1128.99 1139.80 1150.61 1161.42 1172.22 1183.03 1193.84" y="509.70">artifactId</text><text class="p" transform="scale(0.9400 1)" x="1063.20" y="510.60">&gt;</text><text class="p" transform="scale(0.9400 1)" x="652.87 662.41" y="537.60">&lt;/</text><text class="bt" transform="scale(0.8300 1)" x="761.55 772.36 783.16 793.97 804.78 815.58 826.39 837.20 848.01 858.81" y="536.70">dependency</text><text class="p" transform="scale(0.9400 1)" x="767.38" y="537.60">&gt;</text><text class="cp" transform="scale(0.9400 1)" x="653.56 663.10" y="564.30">&lt;!</text><text class="cd" transform="scale(1.0000 1)" x="632.09 641.05 650.02" y="564.90">-- </text><text class="zh" x="663.08 681.02" y="562.90">文案</text><text class="cd" transform="scale(1.0000 1)" x="694.88 703.85" y="564.90">--</text><text class="cp" transform="scale(0.9400 1)" x="758.53" y="564.30">&gt;</text><text class="p" transform="scale(0.9400 1)" x="652.87" y="591.60">&lt;</text><text class="bt" transform="scale(0.8300 1)" x="750.74 761.55 772.36 783.16 793.97 804.78 815.58 826.39 837.20 848.01" y="590.70">dependency</text><text class="p" transform="scale(0.9400 1)" x="757.84" y="591.60">&gt;</text><text class="p" transform="scale(0.9400 1)" x="691.04" y="618.60">&lt;</text><text class="bt" transform="scale(0.8300 1)" x="793.97 804.78 815.58 826.39 837.20 848.01 858.81" y="617.70">groupId</text><text class="p" transform="scale(0.9400 1)" x="767.38" y="618.60">&gt;</text><text class="tx" transform="scale(1.1300 1)" x="646.51 654.45 662.38 670.32 678.26 686.20 694.14 702.08 710.01" y="618.70">com.ruoyi</text><text class="p" transform="scale(0.9400 1)" x="862.80 872.35" y="618.60">&lt;/</text><text class="bt" transform="scale(0.8300 1)" x="999.31 1010.11 1020.92 1031.73 1042.54 1053.34 1064.15" y="617.70">groupId</text><text class="p" transform="scale(0.9400 1)" x="948.69" y="618.60">&gt;</text><text class="p" transform="scale(0.9400 1)" x="691.04" y="645.60">&lt;</text><text class="bt" transform="scale(0.8300 1)" x="793.97 804.78 815.58 826.39 837.20 848.01 858.81 869.62 880.43 891.23" y="644.70">artifactId</text><text class="p" transform="scale(0.9400 1)" x="796.01" y="645.60">&gt;</text><text class="tx" transform="scale(1.1300 1)" x="670.32 678.26 686.20 694.14 702.08 710.01 717.95 725.89 733.83 741.77 749.70 757.64 765.58 773.52 781.46 789.39" y="645.70">ruoyi-copywriter</text><text class="p" transform="scale(0.9400 1)" x="958.23 967.77" y="645.60">&lt;/</text><text class="bt" transform="scale(0.8300 1)" x="1107.38 1118.19 1128.99 1139.80 1150.61 1161.42 1172.22 1183.03 1193.84 1204.64" y="644.70">artifactId</text><text class="p" transform="scale(0.9400 1)" x="1072.74" y="645.60">&gt;</text><text class="p" transform="scale(0.9400 1)" x="652.87 662.41" y="672.60">&lt;/</text><text class="bt" transform="scale(0.8300 1)" x="761.55 772.36 783.16 793.97 804.78 815.58 826.39 837.20 848.01 858.81" y="671.70">dependency</text><text class="p" transform="scale(0.9400 1)" x="767.38" y="672.60">&gt;</text><text class="p" transform="scale(0.9400 1)" x="614.70 624.24" y="726.60">&lt;/</text><text class="bt" transform="scale(0.8300 1)" x="718.32 729.13 739.93 750.74 761.55 772.36 783.16 793.97 804.78 815.58 826.39 837.20" y="725.70">dependencies</text><text class="p" transform="scale(0.9400 1)" x="748.29" y="726.60">&gt;</text><text class="p" transform="scale(0.9400 1)" x="614.70" y="780.60">&lt;</text><text class="bt" transform="scale(0.8300 1)" x="707.51 718.32 729.13 739.93 750.74" y="779.70">build</text><text class="p" transform="scale(0.9400 1)" x="671.95" y="780.60">&gt;</text><text class="ln" transform="scale(1.0000 1)" x="460.60 469.20" y="51.00">50</text><text class="ln" transform="scale(1.0000 1)" x="460.60 469.20" y="78.00">51</text><text class="ln" transform="scale(1.0000 1)" x="460.60 469.20" y="105.00">52</text><text class="ln" transform="scale(1.0000 1)" x="460.60 469.20" y="132.00">53</text><text class="ln" transform="scale(1.0000 1)" x="460.60 469.20" y="159.00">54</text><text class="ln" transform="scale(1.0000 1)" x="460.60 469.20" y="186.00">55</text><text class="ln" transform="scale(1.0000 1)" x="460.60 469.20" y="213.00">56</text><text class="ln" transform="scale(1.0000 1)" x="460.60 469.20" y="240.00">57</text><text class="ln" transform="scale(1.0000 1)" x="460.60 469.20" y="267.00">58</text><text class="ln" transform="scale(1.0000 1)" x="460.60 469.20" y="294.00">59</text><text class="ln" transform="scale(1.0000 1)" x="460.60 469.20" y="321.00">60</text><text class="ln" transform="scale(1.0000 1)" x="460.60 469.20" y="348.00">61</text><text class="ln" transform="scale(1.0000 1)" x="460.60 469.20" y="375.00">62</text><text class="ln" transform="scale(1.0000 1)" x="460.60 469.20" y="402.00">63</text><text class="ln" transform="scale(1.0000 1)" x="460.60 469.20" y="429.00">64</text><text class="ln" transform="scale(1.0000 1)" x="460.60 469.20" y="456.00">65</text><text class="ln" transform="scale(1.0000 1)" x="460.60 469.20" y="483.00">66</text><text class="ln" transform="scale(1.0000 1)" x="460.60 469.20" y="510.00">67</text><text class="ln" transform="scale(1.0000 1)" x="460.60 469.20" y="537.00">68</text><text class="ln" transform="scale(1.0000 1)" x="460.60 469.20" y="564.00">69</text><text class="ln" transform="scale(1.0000 1)" x="460.60 469.20" y="591.00">70</text><text class="ln" transform="scale(1.0000 1)" x="460.60 469.20" y="618.00">71</text><text class="ln" transform="scale(1.0000 1)" x="460.60 469.20" y="645.00">72</text><text class="ln" transform="scale(1.0000 1)" x="460.60 469.20" y="672.00">73</text><text class="ln" transform="scale(1.0000 1)" x="460.60 469.20" y="699.00">74</text><text class="ln" transform="scale(1.0000 1)" x="460.60 469.20" y="726.00">75</text><text class="ln" transform="scale(1.0000 1)" x="460.60 469.20" y="753.00">76</text><text class="ln" transform="scale(1.0000 1)" x="460.60 469.20" y="780.00">77</text></g></svg>
<svg class="ab" style="left:0;top:0" width="1271" height="784" viewBox="0 0 1271 784"><rect x="20.8" y="160" width="224.6" height="125.2" rx="3.6" fill="none" stroke="#e8241b" stroke-width="2.9"/><rect x="596.9" y="542.4" width="442.6" height="154.4" rx="3.6" fill="none" stroke="#e8241b" stroke-width="2.9"/></svg>
<div class="ab" style="left:1087.6px;top:738.6px;font-family:'Liberation Sans', 'Noto Sans CJK SC', sans-serif;font-size:17.2px;line-height:26px;color:#a4a4a4;text-shadow:0.6px 0.6px 0 #fff, 0 0 1.5px rgba(0,0,0,0.12);white-space:pre;letter-spacing:0.72px">@稀土掘金技术社区</div>
</body></html>
